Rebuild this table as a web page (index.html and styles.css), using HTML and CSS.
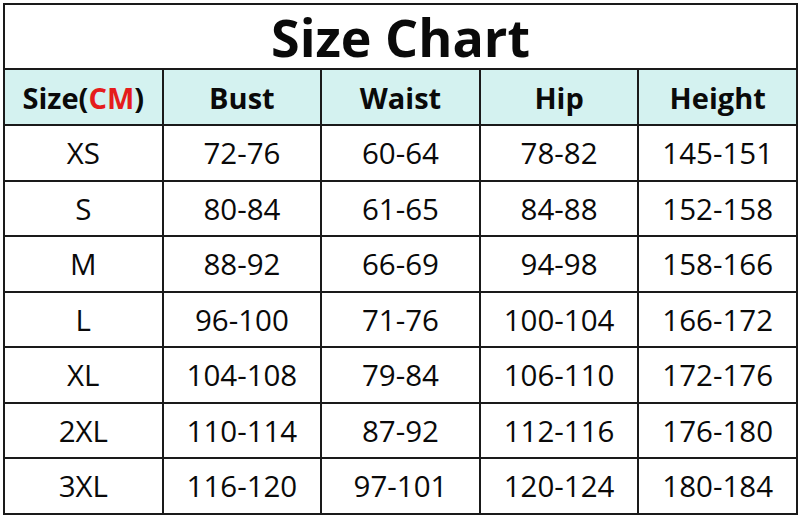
FILE: index.html
```html
<!DOCTYPE html>
<html>
<head>
<meta charset="utf-8">
<link rel="stylesheet" href="styles.css">
</head>
<body>
<table class="chart">
  <tr class="title-row"><td colspan="5" class="title">Size Chart</td></tr>
  <tr class="head">
    <th>Size(<span class="red">CM</span>)</th><th>Bust</th><th>Waist</th><th>Hip</th><th>Height</th>
  </tr>
  <tr><td>XS</td><td>72-76</td><td>60-64</td><td>78-82</td><td>145-151</td></tr>
  <tr><td>S</td><td>80-84</td><td>61-65</td><td>84-88</td><td>152-158</td></tr>
  <tr><td>M</td><td>88-92</td><td>66-69</td><td>94-98</td><td>158-166</td></tr>
  <tr><td>L</td><td>96-100</td><td>71-76</td><td>100-104</td><td>166-172</td></tr>
  <tr><td>XL</td><td>104-108</td><td>79-84</td><td>106-110</td><td>172-176</td></tr>
  <tr><td>2XL</td><td>110-114</td><td>87-92</td><td>112-116</td><td>176-180</td></tr>
  <tr><td>3XL</td><td>116-120</td><td>97-101</td><td>120-124</td><td>180-184</td></tr>
</table>
</body>
</html>
```
FILE: styles.css
```css
html, body {
  margin: 0;
  padding: 0;
  background: #ffffff;
}
body {
  padding: 3px 3px 0 3px;
  font-family: "Open Sans", "Noto Sans", sans-serif;
  color: #0a0a0a;
}
.chart {
  border-collapse: collapse;
  width: 795px;
  table-layout: fixed;
  border: 2px solid #1a1a1a;
}
.chart td, .chart th {
  border: 2px solid #1a1a1a;
  text-align: center;
  padding: 0;
  height: 53.5px;
  font-size: 29.5px;
  font-weight: 400;
  line-height: 1;
}
.chart .title {
  height: 63px;
  font-size: 52px;
  font-weight: 700;
}
.head th {
  background: #d4f2f0;
  font-weight: 700;
  font-size: 29px;
  height: 54px;
}
.red {
  color: #e51c1c;
}
```
